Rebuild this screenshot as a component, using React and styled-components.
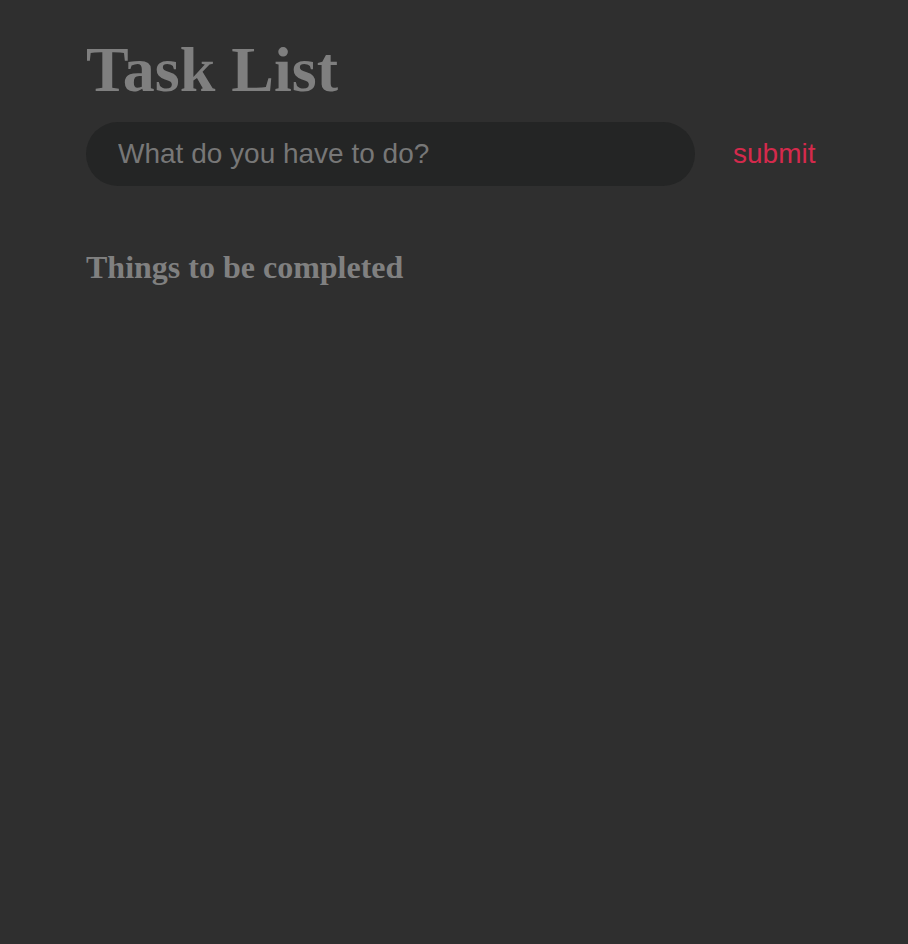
import * as React from 'react'
import styled, { createGlobalStyle } from 'styled-components'

const GlobalStyle = createGlobalStyle`
  html, body {
    margin: 0;
    padding: 0;
    background: #2f2f2f;
  }
  body {
    font-family: "Liberation Serif", "Times New Roman", serif;
  }
`

const App = () => {
  return (
    <Root>
      <GlobalStyle />
      <Container>
        <Title>Task List</Title>
        <Form onSubmit={(e) => e.preventDefault()}>
          <TaskInput placeholder='What do you have to do?' />
          <SubmitButton type='submit'>submit</SubmitButton>
        </Form>
        <SectionTitle>Things to be completed</SectionTitle>
      </Container>
    </Root>
  )
}

const Root = styled.div`
  min-height: 944px;
  background: #2f2f2f;
  box-sizing: border-box;
`

const Container = styled.div`
  padding: 38px 86px 0 86px;
`

const Title = styled.h1`
  margin: 0;
  font-family: "Liberation Serif", "Times New Roman", serif;
  font-size: 64px;
  font-weight: bold;
  line-height: 1;
  color: #7f7f7f;
`

const Form = styled.form`
  display: flex;
  align-items: center;
  margin-top: 20px;
`

const TaskInput = styled.input`
  width: 609px;
  height: 64px;
  box-sizing: border-box;
  padding: 0 32px;
  border: none;
  outline: none;
  border-radius: 32px;
  background: #242525;
  font-family: "Liberation Sans", Arial, sans-serif;
  font-size: 28px;
  color: #bbb;
  &::placeholder {
    color: #777;
  }
`

const SubmitButton = styled.button`
  margin-left: 38px;
  padding: 0;
  border: none;
  background: none;
  font-family: "Liberation Sans", Arial, sans-serif;
  font-size: 28px;
  color: #d42a4c;
  cursor: pointer;
`

const SectionTitle = styled.h2`
  margin: 65px 0 0 0;
  font-family: "Liberation Serif", "Times New Roman", serif;
  font-size: 32px;
  font-weight: bold;
  line-height: 1;
  color: #808080;
`

export default App
